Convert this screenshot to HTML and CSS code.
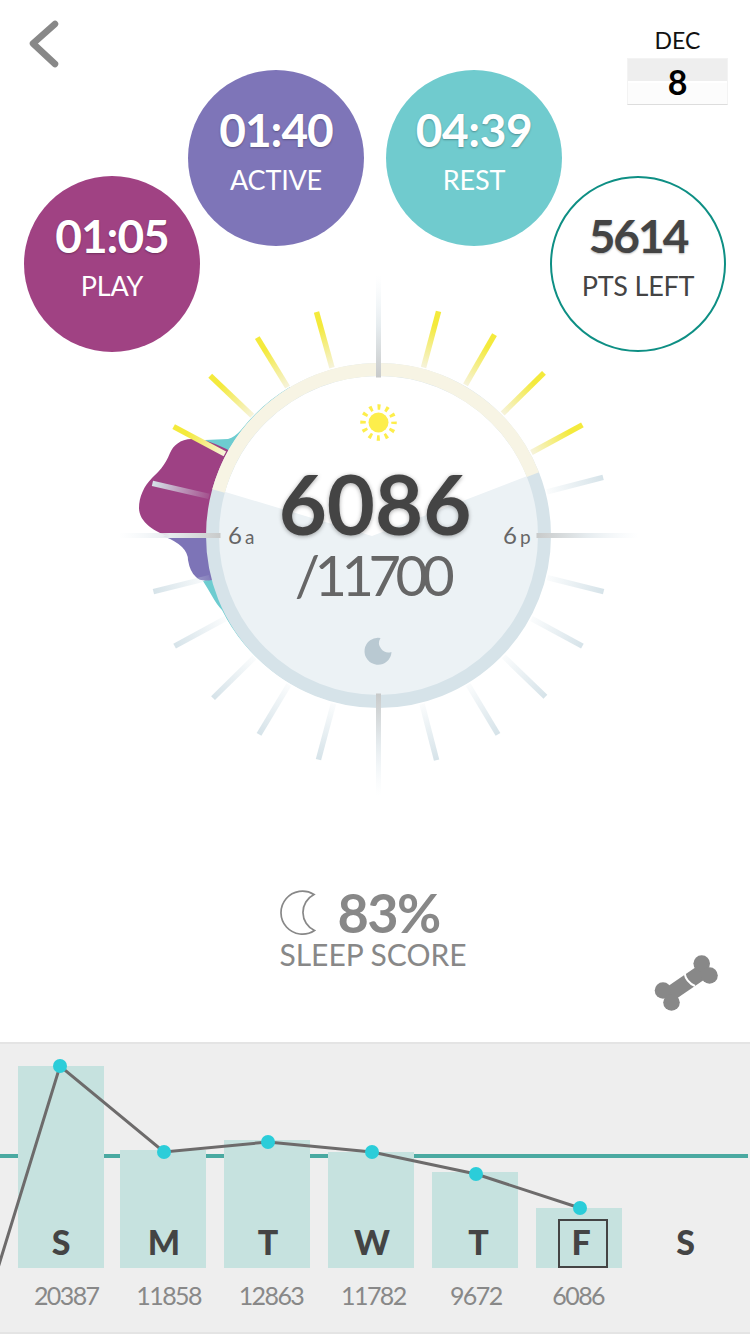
FILE: index.html
```html
<!DOCTYPE html>
<html lang="en">
<head>
    <meta charset="UTF-8">
    <meta name="viewport" content="width=device-width, initial-scale=1.0">
    <title>Daily points</title>
    <link rel="stylesheet" href="styles.css">
</head>
<body>
    <div id="screen">
        <section class="stage">
            <header class="top-bar">
                <svg class="back" width="60" height="88" viewBox="0 0 60 88">
                    <path d="M55 24 L33 43.5 L55 64" fill="none" stroke="#888" stroke-width="6.5" stroke-linecap="round" stroke-linejoin="round"/>
                </svg>
                <div class="date">
                    <div class="date-month">DEC</div>
                    <div class="date-day">8</div>
                </div>
            </header>

            <div class="bubble bubble-play">
                <span class="bubble-time">01:05</span>
                <span class="bubble-label">PLAY</span>
            </div>
            <div class="bubble bubble-active">
                <span class="bubble-time">01:40</span>
                <span class="bubble-label">ACTIVE</span>
            </div>
            <div class="bubble bubble-rest">
                <span class="bubble-time">04:39</span>
                <span class="bubble-label">REST</span>
            </div>
            <div class="bubble bubble-left">
                <span class="bubble-time">5614</span>
                <span class="bubble-label">PTS LEFT</span>
            </div>

            <div class="dial">
                <svg width="530" height="530" viewBox="113 271 530 530">
                    <defs>
                        <linearGradient id="rayYellow" x1="0" y1="0" x2="0" y2="1">
                            <stop offset="0.25" stop-color="#f4ea3c"/>
                            <stop offset="1" stop-color="#f6f3dc"/>
                        </linearGradient>
                        <linearGradient id="rayBlue" x1="0" y1="0" x2="0" y2="1">
                            <stop offset="0" stop-color="#d6e3e9"/>
                            <stop offset="1" stop-color="#d6e3e9" stop-opacity="0.1"/>
                        </linearGradient>
                        <linearGradient id="rayGray" x1="0" y1="0" x2="0" y2="1">
                            <stop offset="0" stop-color="#eef4f8" stop-opacity="0"/>
                            <stop offset="0.5" stop-color="#e6ecef"/>
                            <stop offset="1" stop-color="#c8caca"/>
                        </linearGradient>
                    </defs>

                    <!-- activity blobs sit behind the ring -->
                    <path d="M205 440 L228 439 Q235 437 241 430 A178 178 0 0 1 290 387 L320 420 L250 470 Z" fill="#6dccd0"/>
                    <path d="M203 581 Q208 589 212 596 Q217 605 222 610 A176 176 0 0 0 345 704 L340 600 L250 560 Z" fill="#6dccd0"/>
                    <path d="M163 536 Q176 541 182 547 Q188 553 188 560 Q190 572 196 577 Q200 582 212 580 L260 540 L240 530 Z" fill="#7d74b7"/>
                    <path d="M232 452 C215 443 205 439 192 439 C180 439 173 446 170 453 C165 466 158 472 152 478 C144 486 139 497 139 508 C139 522 155 533 172 537 L260 538 L260 470 Z" fill="#9e4184"/>

                    <g transform="translate(378.5 535.5)">
                        <rect class="ray" x="-2.75" y="-232" width="5.5" height="58" fill="url(#rayYellow)" transform="rotate(15)"/>
                        <rect class="ray" x="-2.75" y="-232" width="5.5" height="58" fill="url(#rayYellow)" transform="rotate(30)"/>
                        <rect class="ray" x="-2.75" y="-232" width="5.5" height="58" fill="url(#rayYellow)" transform="rotate(45.5)"/>
                        <rect class="ray" x="-2.75" y="-232" width="5.5" height="58" fill="url(#rayYellow)" transform="rotate(61.5)"/>
                        <rect class="ray" x="-2.75" y="-232" width="5.5" height="58" fill="url(#rayYellow)" transform="rotate(-15.5)"/>
                        <rect class="ray" x="-2.75" y="-232" width="5.5" height="58" fill="url(#rayYellow)" transform="rotate(-31.5)"/>
                        <rect class="ray" x="-2.75" y="-232" width="5.5" height="58" fill="url(#rayYellow)" transform="rotate(-46.5)"/>
                        <rect class="ray" x="-2.75" y="-232" width="5.5" height="58" fill="url(#rayYellow)" transform="rotate(-62)"/>
                        <rect class="ray" x="-2.75" y="-232" width="5.5" height="58" fill="url(#rayBlue)" transform="rotate(75.5)"/>
                        <rect class="ray" x="-2.75" y="-232" width="5.5" height="58" fill="url(#rayBlue)" transform="rotate(104)"/>
                        <rect class="ray" x="-2.75" y="-232" width="5.5" height="58" fill="url(#rayBlue)" transform="rotate(118.5)"/>
                        <rect class="ray" x="-2.75" y="-232" width="5.5" height="58" fill="url(#rayBlue)" transform="rotate(134)"/>
                        <rect class="ray" x="-2.75" y="-232" width="5.5" height="58" fill="url(#rayBlue)" transform="rotate(149)"/>
                        <rect class="ray" x="-2.75" y="-232" width="5.5" height="58" fill="url(#rayBlue)" transform="rotate(165.5)"/>
                        <rect class="ray" x="-2.75" y="-232" width="5.5" height="58" fill="url(#rayBlue)" transform="rotate(-77)"/>
                        <rect class="ray" x="-2.75" y="-232" width="5.5" height="58" fill="url(#rayBlue)" transform="rotate(-104)"/>
                        <rect class="ray" x="-2.75" y="-232" width="5.5" height="58" fill="url(#rayBlue)" transform="rotate(-118.5)"/>
                        <rect class="ray" x="-2.75" y="-232" width="5.5" height="58" fill="url(#rayBlue)" transform="rotate(-134.5)"/>
                        <rect class="ray" x="-2.75" y="-232" width="5.5" height="58" fill="url(#rayBlue)" transform="rotate(-149)"/>
                        <rect class="ray" x="-2.75" y="-232" width="5.5" height="58" fill="url(#rayBlue)" transform="rotate(-165)"/>
                    </g>

                    <!-- face and ring -->
                    <circle cx="378.5" cy="535.5" r="162" fill="#ecf2f5"/>
                    <path d="M372 536 L222 491 A163 163 0 0 1 530 475 Z" fill="#fff"/>
                    <circle cx="378.5" cy="535.5" r="166" fill="none" stroke="#d6e3e9" stroke-width="13"/>
                    <path d="M218.5 491.1 A166 166 0 0 1 532.9 474.7" fill="none" stroke="#f7f4e4" stroke-width="13"/>

                    <g transform="translate(378.5 535.5)">
                        <rect x="-2.5" y="-260" width="5" height="102" fill="url(#rayGray)"/>
                        <rect x="-2.5" y="-260" width="5" height="102" fill="url(#rayGray)" transform="rotate(90)"/>
                        <rect x="-2.5" y="-260" width="5" height="102" fill="url(#rayGray)" transform="rotate(180)"/>
                        <rect x="-2.5" y="-260" width="5" height="102" fill="url(#rayGray)" transform="rotate(270)"/>
                    </g>

                    <!-- sun -->
                    <circle cx="378.5" cy="422.5" r="10" fill="#fdee4b"/>
                    <circle cx="378.5" cy="422.5" r="15.5" fill="none" stroke="#fdee4b" stroke-width="5.5" stroke-dasharray="3 5.12" stroke-dashoffset="1.5"/>
                    <!-- moon -->
                    <path d="M380.5 638 A13.5 13.5 0 1 0 391.5 652 A9.5 9.5 0 0 1 380.5 638 Z" fill="#b9c9d2"/>
                </svg>
                <div class="dial-text">
                    <div class="dial-score">6086</div>
                    <div class="dial-goal">/11700</div>
                </div>
                <span class="dial-hour dial-hour-am">6<small>a</small></span>
                <span class="dial-hour dial-hour-pm">6<small>p</small></span>
            </div>

            <div class="sleep">
                <div class="sleep-top">
                    <svg width="40" height="46" viewBox="279 890 40 46">
                        <path d="M314 894.5 A21.5 21.5 0 1 0 314.5 930.5 A20 20 0 0 1 314 894.5 Z" fill="none" stroke="#888" stroke-width="1.7"/>
                    </svg>
                    <span class="sleep-pct">83%</span>
                </div>
                <div class="sleep-label">SLEEP SCORE</div>
            </div>

            <svg class="bone" width="70" height="60" viewBox="652 952 70 60">
                <path d="M667 996 L705 970" stroke="#888" stroke-width="15"/>
                <circle cx="701.7" cy="963.5" r="8.3" fill="#888"/>
                <circle cx="709.5" cy="975.5" r="8.3" fill="#888"/>
                <circle cx="663" cy="990.5" r="8.3" fill="#888"/>
                <circle cx="671.5" cy="1002.5" r="8.3" fill="#888"/>
                <path d="M684.5 973 Q686 982 695 986" fill="none" stroke="#fff" stroke-width="2"/>
            </svg>
        </section>

        <section class="chart">
            <div class="goal-line"></div>
            <div class="days">
                <div class="day"><div class="bar" style="height: 202px"><span class="day-name">S</span></div></div>
                <div class="day"><div class="bar" style="height: 118px"><span class="day-name">M</span></div></div>
                <div class="day"><div class="bar" style="height: 128px"><span class="day-name">T</span></div></div>
                <div class="day"><div class="bar" style="height: 116px"><span class="day-name">W</span></div></div>
                <div class="day"><div class="bar" style="height: 96px"><span class="day-name">T</span></div></div>
                <div class="day"><div class="bar" style="height: 60px"><span class="day-name day-today">F</span></div></div>
                <div class="day"><div class="bar bar-empty" style="height: 60px"><span class="day-name">S</span></div></div>
            </div>
            <div class="values">
                <span>20387</span>
                <span>11858</span>
                <span>12863</span>
                <span>11782</span>
                <span>9672</span>
                <span>6086</span>
            </div>
            <svg class="trend" width="750" height="288" viewBox="0 1044 750 288">
                <polyline points="-2,1268 60,1066 164,1152 268,1142 372,1152 476,1174 580,1208" fill="none" stroke="#6d6b6b" stroke-width="3"/>
                <circle cx="60" cy="1066" r="7" fill="#2bcdd9"/>
                <circle cx="164" cy="1152" r="7" fill="#2bcdd9"/>
                <circle cx="268" cy="1142" r="7" fill="#2bcdd9"/>
                <circle cx="372" cy="1152" r="7" fill="#2bcdd9"/>
                <circle cx="476" cy="1174" r="7" fill="#2bcdd9"/>
                <circle cx="580" cy="1208" r="7" fill="#2bcdd9"/>
            </svg>
        </section>
    </div>
</body>
</html>
```

FILE: styles.css
```css
body {
    margin: 0;
    background-color: white;
    font-family: Lato, "Open Sans", sans-serif;
}

#screen {
    width: 750px;
    height: 1334px;
    overflow: hidden;
    display: flex;
    flex-direction: column;
}

.stage {
    position: relative;
    height: 1042px;
    display: flex;
    flex-direction: column;
}

.top-bar {
    height: 106px;
    display: flex;
    justify-content: space-between;
    align-items: flex-start;
    padding-right: 22px;
}

.date {
    width: 101px;
    padding-top: 26px;
    text-align: center;
}

.date-month {
    font-size: 23px;
    line-height: 28px;
    color: #111;
    margin-bottom: 4px;
}

.date-day {
    height: 47px;
    font-size: 34px;
    font-weight: 700;
    line-height: 45px;
    color: #000;
    box-sizing: border-box;
    border: 1px solid #f3f3f3;
    border-bottom: 1px solid #ddd;
    background: linear-gradient(#eee 0, #eee 22px, white 22px, white 24px, #fcfcfc 24px);
}

/* the four bubbles float above the dial */
.bubble {
    position: absolute;
    width: 176px;
    height: 176px;
    box-sizing: border-box;
    border-radius: 50%;
    display: flex;
    flex-direction: column;
    align-items: center;
    padding-top: 32px;
    color: white;
}

.bubble-play {
    left: 24px;
    top: 176px;
    background-color: #a04283;
}

.bubble-active {
    left: 188px;
    top: 70px;
    background-color: #7e75b8;
}

.bubble-rest {
    left: 386px;
    top: 70px;
    background-color: #70cbce;
}

.bubble-left {
    left: 550px;
    top: 176px;
    border: 2px solid #0e8f84;
    padding-top: 30px;
    color: #444;
}

.bubble-time {
    font-size: 46px;
    font-weight: 700;
    line-height: 56px;
    letter-spacing: -1px;
    text-shadow: 0 1px 2px rgba(0, 0, 0, 0.3);
}

.bubble-rest .bubble-time {
    letter-spacing: -0.4px;
}

.bubble-left .bubble-time {
    letter-spacing: -2px;
}

.bubble-label {
    font-size: 27px;
    line-height: 32px;
    letter-spacing: -0.2px;
    margin-top: 6px;
}

.dial {
    position: relative;
    width: 530px;
    height: 530px;
    margin: 165px 0 0 113px;
}

.dial svg {
    display: block;
}

.dial-text {
    position: absolute;
    left: 0;
    right: 0;
    top: 188px;
    text-align: center;
}

.dial-score {
    font-size: 83px;
    font-weight: 700;
    line-height: 88px;
    color: #444;
    text-shadow: 0 1px 4px rgba(0, 0, 0, 0.35);
    margin-right: 6px;
}

.dial-goal {
    font-size: 56px;
    font-weight: 400;
    line-height: 56px;
    letter-spacing: -5.5px;
    color: #666;
    margin-right: 12px;
}

.dial-hour {
    position: absolute;
    top: 250px;
    font-size: 24px;
    line-height: 28px;
    color: #666;
}

.dial-hour small {
    font-size: 19px;
    margin-left: 3px;
}

.dial-hour-am {
    left: 115px;
}

.dial-hour-pm {
    left: 390px;
}

.sleep {
    align-self: center;
    margin: 89px 0 0 -4px;
}

.sleep-top {
    display: flex;
    align-items: center;
    gap: 18px;
    height: 46px;
}

.sleep-pct {
    font-size: 54px;
    font-weight: 700;
    line-height: 46px;
    letter-spacing: -1.5px;
    color: #888;
}

.sleep-label {
    font-size: 30px;
    line-height: 36px;
    color: #888;
    white-space: nowrap;
}

.bone {
    display: block;
    align-self: flex-end;
    margin: -20px 28px 0 0;
}

.chart {
    position: relative;
    height: 292px;
    box-sizing: border-box;
    background-color: #eee;
    border-top: 2px solid #e4e4e4;
    border-bottom: 2px solid #e4e4e4;
}

.goal-line {
    position: absolute;
    left: 0;
    top: 110px;
    width: 748px;
    height: 4px;
    background-color: #4aa9a1;
}

.days {
    position: relative;
    height: 224px;
    display: flex;
    align-items: flex-end;
    gap: 18px;
    padding-left: 18px;
}

.day {
    width: 86px;
}

.day:first-child {
    margin-right: -2px;
}

.bar {
    position: relative;
    background-color: #c6e2df;
}

.bar-empty {
    background-color: transparent;
    margin-left: 5px;
}

.day-name {
    position: absolute;
    left: 0;
    right: 0;
    bottom: 6px;
    height: 40px;
    font-size: 34px;
    font-weight: 900;
    line-height: 40px;
    text-align: center;
    color: #444;
}

.day:nth-child(2) .day-name,
.day:nth-child(3) .day-name,
.day:nth-child(4) .day-name {
    left: 2px;
}

.day:nth-child(5) .day-name {
    left: 7px;
}

.day-today {
    left: 22px;
    right: 14px;
    bottom: 0;
    height: 49px;
    padding-right: 4px;
    line-height: 42px;
    box-sizing: border-box;
    border: 2px solid #444;
}

.values {
    display: flex;
    padding: 10px 0 0 15px;
}

.values span {
    width: 102.4px;
    text-align: center;
    font-size: 25px;
    line-height: 34px;
    letter-spacing: -1.6px;
    color: #888;
}

.trend {
    position: absolute;
    left: 0;
    top: 0;
}
```
